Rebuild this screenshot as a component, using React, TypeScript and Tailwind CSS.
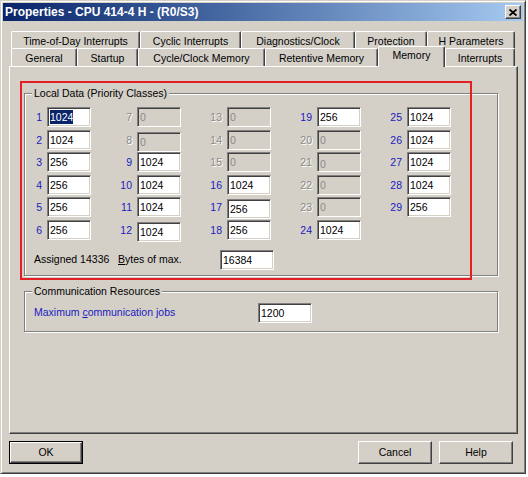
import React from "react";

type Cell = { n: number; v: string; dis?: boolean; sel?: boolean; shift?: boolean; tshift?: boolean } | null;

const cols: Cell[][] = [
  [
    { n: 1, v: "1024", sel: true },
    { n: 2, v: "1024" },
    { n: 3, v: "256" },
    { n: 4, v: "256" },
    { n: 5, v: "256" },
    { n: 6, v: "256" },
  ],
  [
    { n: 7, v: "0", dis: true },
    { n: 8, v: "0", dis: true, shift: true },
    { n: 9, v: "1024" },
    { n: 10, v: "1024" },
    { n: 11, v: "1024" },
    { n: 12, v: "1024", shift: true },
  ],
  [
    { n: 13, v: "0", dis: true },
    { n: 14, v: "0", dis: true },
    { n: 15, v: "0", dis: true },
    { n: 16, v: "1024" },
    { n: 17, v: "256", shift: true },
    { n: 18, v: "256" },
  ],
  [
    { n: 19, v: "256" },
    { n: 20, v: "0", dis: true },
    { n: 21, v: "0", dis: true, tshift: true },
    { n: 22, v: "0", dis: true },
    { n: 23, v: "0", dis: true },
    { n: 24, v: "1024" },
  ],
  [
    { n: 25, v: "1024" },
    { n: 26, v: "1024" },
    { n: 27, v: "1024" },
    { n: 28, v: "1024" },
    { n: 29, v: "256" },
    null,
  ],
];

function Field({ v, dis, sel, shift, tshift, w = 44 }: { v: string; dis?: boolean; sel?: boolean; shift?: boolean; tshift?: boolean; w?: number }) {
  return (
    <div
      className={`h-[20px] shrink-0 border border-t-[#808080] border-l-[#808080] border-r-white border-b-white shadow-[inset_1px_1px_0_#404040,inset_-1px_-1px_0_#d4d0c8] pl-[2px] leading-[18px] whitespace-nowrap ${
        dis ? "bg-[#d4d0c8] text-[#8a8a8a]" : "bg-white text-black"
      } ${shift ? "mt-[2px]" : ""} ${w === 44 ? "w-[44px]" : "w-[54px]"}`}
    >
      {sel ? (
        <span className="bg-[#0a246a] text-white inline-block leading-[14px] mt-[1px]">{v}</span>
      ) : (
        <span className={`inline-block ${tshift ? "mt-[2px]" : ""}`}>{v}</span>
      )}
    </div>
  );
}

function Tab({ label, w, sel }: { label: string; w: number; sel?: boolean }) {
  return (
    <div
      style={{ width: w }}
      className={`relative shrink-0 flex justify-center border-l border-t border-l-white border-t-white border-r border-r-[#404040] rounded-t-[2px] shadow-[inset_-1px_0_0_#808080] bg-[#d4d0c8] whitespace-nowrap ${
        sel ? "h-[21px] mb-[-1px] z-10 pt-[1px]" : "h-full pt-[2px]"
      }`}
    >
      {label}
    </div>
  );
}

function GroupLabel({ children }: { children: React.ReactNode }) {
  return (
    <div className="self-start ml-[7px] -mt-[7px] px-[2px] bg-[#d4d0c8] leading-[12px] whitespace-nowrap">{children}</div>
  );
}

function Button({ children, def }: { children: React.ReactNode; def?: boolean }) {
  return (
    <div className={`w-[74px] h-[23px] ${def ? "border border-black" : ""}`}>
      <div className="w-full h-full border border-t-white border-l-white border-r-[#404040] border-b-[#404040] shadow-[inset_-1px_-1px_0_#808080] flex items-center justify-center bg-[#d4d0c8]">
        {children}
      </div>
    </div>
  );
}

export default function App() {
  const blue = "text-[#1a1ac0]";
  return (
    <div className="relative w-[528px] h-[477px] bg-white font-['Liberation_Sans',Arial,sans-serif] text-[10.5px] text-black overflow-hidden">
      <div className="w-[526px] h-[474px] bg-[#d4d0c8] border border-t-[#d4d0c8] border-l-[#d4d0c8] border-r-[#404040] border-b-[#404040] shadow-[inset_1px_1px_0_#fff,inset_-1px_-1px_0_#808080] p-[2px] flex flex-col">
        {/* title bar */}
        <div className="h-[18px] shrink-0 bg-gradient-to-r from-[#0a246a] to-[#a6caf0] flex items-center justify-between pl-[2px] pr-[2px]">
          <span className="text-white font-bold text-[12px] leading-[18px] whitespace-nowrap">Properties - CPU 414-4 H - (R0/S3)</span>
          <div className="w-[16px] h-[14px] border border-t-white border-l-white border-r-[#404040] border-b-[#404040] shadow-[inset_-1px_-1px_0_#808080] bg-[#d4d0c8] flex items-center justify-center">
            <svg width="8" height="7" viewBox="0 0 8 7">
              <path d="M0.5 0.5 L7.5 6.5 M7.5 0.5 L0.5 6.5" stroke="#000" strokeWidth="1.8" />
            </svg>
          </div>
        </div>

        {/* tabs */}
        <div className="mt-[10px] ml-[8px] flex h-[17px]">
          <Tab label="Time-of-Day Interrupts" w={129} />
          <Tab label="Cyclic Interrupts" w={101} />
          <Tab label="Diagnostics/Clock" w={114} />
          <Tab label="Protection" w={72} />
          <Tab label="H Parameters" w={88} />
        </div>
        <div className="ml-[8px] flex items-end h-[18px]">
          <Tab label="General" w={66} />
          <Tab label="Startup" w={61} />
          <Tab label="Cycle/Clock Memory" w={127} />
          <Tab label="Retentive Memory" w={113} />
          <Tab label="Memory" w={67} sel />
          <Tab label="Interrupts" w={70} />
        </div>

        {/* panel */}
        <div className="ml-[6px] w-[509px] h-[368px] shrink-0 border border-t-white border-l-white border-r-[#404040] border-b-[#404040] shadow-[inset_-1px_-1px_0_#808080] flex flex-col">
          {/* Local data group */}
          <div className="ml-[14px] mt-[26px] w-[474px] h-[183px] shrink-0 border border-[#808080] shadow-[inset_1px_1px_0_#fff,1px_1px_0_#fff] flex flex-col">
            <GroupLabel>Local Data (Priority Classes)</GroupLabel>
            <div className="mt-[8px] grid grid-flow-col grid-cols-[repeat(5,90px)] grid-rows-[23px_22px_23px_22px_23px_20px]">
              {cols.flat().map((c, i) =>
                c ? (
                  <div key={i} className="flex items-start">
                    <div
                      className={`w-[22px] pr-[5px] text-right leading-[20px] ${
                        c.dis ? "text-[#8a8a8a] [text-shadow:1px_1px_0_#fff]" : "text-[#1a1ac0]"
                      }`}
                    >
                      {c.n}
                    </div>
                    <Field v={c.v} dis={c.dis} sel={c.sel} shift={c.shift} tshift={c.tshift} />
                  </div>
                ) : (
                  <div key={i} />
                )
              )}
            </div>
            <div className="mt-[10px] ml-[9px] flex items-center">
              <span className="w-[186px] whitespace-nowrap">
                Assigned 14336&nbsp;&nbsp; <span className="underline">B</span>ytes of max.
              </span>
              <Field v="16384" w={54} />
            </div>
          </div>

          {/* Communication group */}
          <div className="ml-[14px] mt-[15px] w-[474px] h-[41px] shrink-0 border border-[#808080] shadow-[inset_1px_1px_0_#fff,1px_1px_0_#fff] flex flex-col">
            <GroupLabel>Communication Resources</GroupLabel>
            <div className="mt-[6px] ml-[9px] flex items-center">
              <span className={`w-[224px] whitespace-nowrap ${blue}`}>
                Maximum <span className="underline">c</span>ommunication jobs
              </span>
              <Field v="1200" w={54} />
            </div>
          </div>
        </div>

        {/* buttons */}
        <div className="mt-[7px] ml-[6px] mr-[10px] flex justify-between">
          <Button def>OK</Button>
          <div className="flex gap-[7px]">
            <Button>Cancel</Button>
            <Button>Help</Button>
          </div>
        </div>
      </div>

      {/* red annotation box */}
      <div className="absolute left-[20px] top-[81px] w-[452px] h-[199px] border-2 border-[#e31e24] pointer-events-none" />
    </div>
  );
}
